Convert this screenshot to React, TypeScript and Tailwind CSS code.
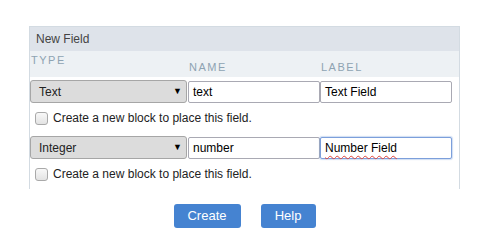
import React from 'react';

const Checkbox: React.FC = () => (
  <span className="inline-block w-[13px] h-[13px] rounded-[3px] border border-[#a9a9a9] bg-gradient-to-b from-[#f8f8f8] to-[#e3e3e3]" />
);

interface RowProps {
  type: string;
  name: string;
  label: string;
  focused?: boolean;
}

const FieldRow: React.FC<RowProps> = ({ type, name, label, focused }) => (
  <>
    <div className="flex items-center h-[23px] mt-[3px]">
      <div className="flex items-center justify-between w-[157px] h-[23px] bg-[#dcdcdc] border border-[#a6a6a6] rounded-[3px] pl-[8px] pr-[4px] text-[12px] text-[#222]">
        <span>{type}</span>
        <span className="text-[9px] text-black">▼</span>
      </div>
      <div className="ml-[1px] w-[132px] h-[22px] border border-[#a9a9b3] rounded-[2px] bg-white flex items-center pl-[4px] text-[12px] text-black">
        {name}
      </div>
      <div
        className={
          focused
            ? 'w-[132px] h-[22px] border border-[#7c9fdb] rounded-[2px] bg-white flex items-center pl-[4px] text-[12px] text-black shadow-[0_0_1px_1px_rgba(120,160,220,0.35)]'
            : 'w-[132px] h-[22px] border border-[#a9a9b3] rounded-[2px] bg-white flex items-center pl-[4px] text-[12px] text-black'
        }
      >
        {focused ? (
          <span className="underline decoration-wavy decoration-[#e0443a] decoration-[1px] underline-offset-[3px]">{label}</span>
        ) : (
          label
        )}
      </div>
    </div>
    <div className="flex items-center h-[30px] pl-[5px] gap-[5px] text-[12px] text-[#222]">
      <Checkbox />
      <span>Create a new block to place this field.</span>
    </div>
  </>
);

export default function App() {
  return (
    <div className="w-[482px] h-[245px] bg-white pt-[26px] font-['Liberation_Sans',Arial,sans-serif]">
      <div className="ml-[29px] w-[431px] border-x border-t border-[#d3dbe2]">
        <div className="h-[24px] bg-[#dee3ea] flex items-center pl-[6px] text-[12px] text-[#444]">New Field</div>
        <div className="h-[26px] bg-[#edf1f4] flex text-[11px] tracking-[1.5px] text-[#8ea3b2]">
          <span className="w-[158px] pl-[1px] pt-[1px]">TYPE</span>
          <span className="w-[132px] pl-[1px] pt-[8px]">NAME</span>
          <span className="pt-[8px] pl-[1px]">LABEL</span>
        </div>
        <FieldRow type="Text" name="text" label="Text Field" />
        <FieldRow type="Integer" name="number" label="Number Field" focused />
      </div>
      <div className="ml-[29px] w-[431px] flex justify-center gap-[20px] mt-[15px]">
        <button className="w-[67px] h-[24px] rounded-[3px] bg-[#4583d1] text-white text-[13px]">Create</button>
        <button className="w-[55px] h-[24px] rounded-[3px] bg-[#4583d1] text-white text-[13px]">Help</button>
      </div>
    </div>
  );
}
